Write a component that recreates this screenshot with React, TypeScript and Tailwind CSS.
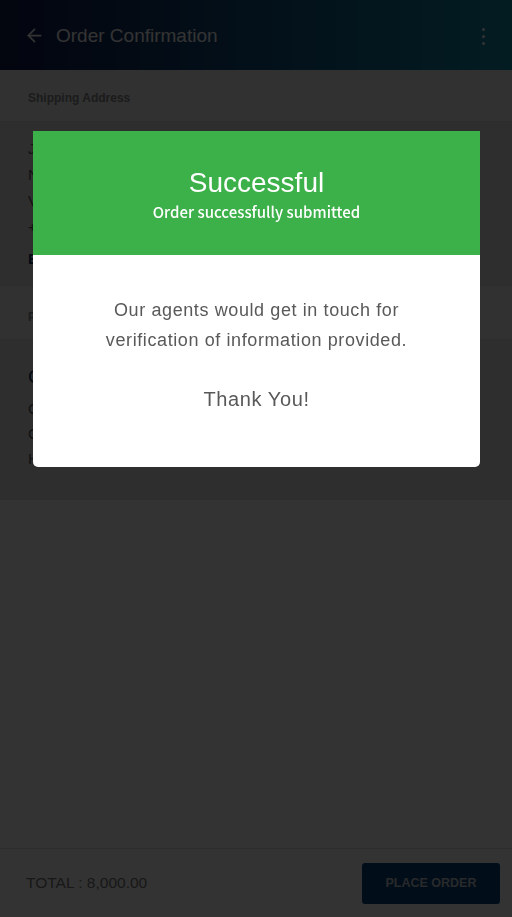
import React from 'react';
import { ArrowLeft } from 'lucide-react';

const sans = { fontFamily: '"Liberation Sans", Arial, sans-serif' };

const SuccessModal: React.FC = () => (
  <div className="fixed inset-0 bg-black/80 pt-[131px]">
    <div className="mx-[33px] w-[447px] overflow-hidden rounded-b-[5px] bg-white">
      <div className="flex h-[124px] flex-col items-center bg-[#3cb049] pt-[36px] text-white">
        <h2 className="text-[28px] leading-[32px]" style={sans}>Successful</h2>
        <p
          className="mt-[3px] text-[15px] font-medium leading-[20px]"
          style={{ fontFamily: '"Noto Sans CJK JP", "Noto Sans", sans-serif' }}
        >
          Order successfully submitted
        </p>
      </div>
      <div
        className="flex h-[212px] flex-col items-center pt-[40px] text-center tracking-[0.6px] text-[#595959]"
        style={sans}
      >
        <p className="text-[18px] leading-[30px]">
          Our agents would get in touch for
          <br />
          verification of information provided.
        </p>
        <p className="mt-[29px] text-[20px] leading-[30px]">Thank You!</p>
      </div>
    </div>
  </div>
);

export default function App() {
  return (
    <div className="relative flex min-h-screen w-full flex-col bg-white" style={sans}>
      <header className="flex h-[70px] items-center bg-gradient-to-r from-[#0f194b] via-[#0f5080] to-[#118ca8] pl-[24px] pr-[27px] text-white">
        <ArrowLeft size={21} strokeWidth={2} />
        <h1 className="ml-[11px] mt-[2px] flex-1 text-[19px]">Order Confirmation</h1>
        <div className="mt-[3px] flex flex-col items-center gap-[3.5px]">
          <span className="h-[3.5px] w-[3.5px] rounded-full bg-white" />
          <span className="h-[3.5px] w-[3.5px] rounded-full bg-white" />
          <span className="h-[3.5px] w-[3.5px] rounded-full bg-white" />
        </div>
      </header>

      <main className="flex-1">
        <div className="h-[52px] border-b border-[#e2e2e2] bg-[#f3f3f3] px-[28px] pt-[20px] text-[12px] font-semibold leading-[16px] text-[#8a8a8a]">
          Shipping Address
        </div>
        <div className="flex h-[163px] flex-col bg-[#e6e6e6] px-[28px] pt-[14px] text-[15px] leading-[26px] text-[#555]">
          <p>John Adewale</p>
          <p>No 14, Admiralty Way, Lekki Phase 1</p>
          <p>Victoria Island, Lagos</p>
          <p>+234 803 123 4567</p>
          <p className="mt-[6px] font-bold text-[#0a2d5a]">EDIT ADDRESS</p>
        </div>
        <div className="h-[55px] border-y border-[#dedede] bg-[#f3f3f3] px-[28px] pt-[23px] text-[12px] font-semibold leading-[16px] text-[#8a8a8a]">
          Payment Method
        </div>
        <div className="flex h-[160px] flex-col bg-[#e6e6e6] px-[28px] pt-[24px] text-[15px] leading-[25px] text-[#555]">
          <p className="text-[19px] leading-[26px] text-[#0a2d5a]">Cash on Delivery</p>
          <p className="mt-[6px]">Card payment on delivery</p>
          <p>Cash payment on delivery</p>
          <p>Hand over to the delivery agent</p>
        </div>
      </main>

      <footer className="flex h-[69px] items-center justify-between border-t border-[#e0e0e0] bg-white pl-[26px] pr-[12px]">
        <span className="text-[15.5px] text-[#777]">TOTAL : 8,000.00</span>
        <button className="h-[41px] w-[138px] rounded-[3px] bg-[#054178] text-[12.5px] font-bold text-[#c5ccd4]">
          PLACE ORDER
        </button>
      </footer>

      <SuccessModal />
    </div>
  );
}
